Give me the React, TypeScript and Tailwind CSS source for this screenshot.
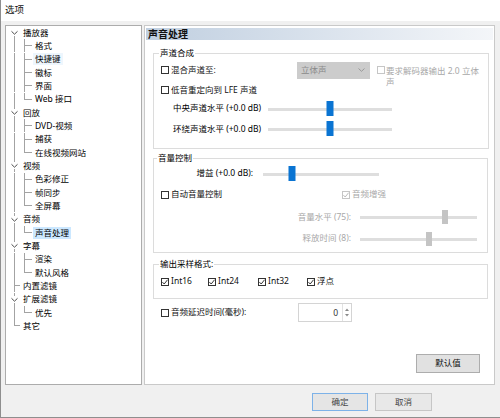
import React from 'react';

type TreeNode = { label: string; children?: string[] };

const tree: TreeNode[] = [
  { label: '播放器', children: ['格式', '快捷键', '徽标', '界面', 'Web 接口'] },
  { label: '回放', children: ['DVD-视频', '捕获', '在线视频网站'] },
  { label: '视频', children: ['色彩修正', '帧同步', '全屏幕'] },
  { label: '音频', children: ['声音处理'] },
  { label: '字幕', children: ['渲染', '默认风格'] },
  { label: '内置滤镜' },
  { label: '扩展滤镜', children: ['优先'] },
  { label: '其它' },
];

const LINE = '#a3a3a3';

function Check({
  label,
  checked = false,
  disabled = false,
  className = '',
}: {
  label: string;
  checked?: boolean;
  disabled?: boolean;
  className?: string;
}) {
  return (
    <div className={`flex items-center gap-[2px] ${className}`}>
      <span
        className={`flex h-[8px] w-[8px] shrink-0 items-center justify-center border bg-white ${
          disabled ? 'border-[#c6c6c6]' : 'border-[#333333]'
        }`}
      >
        {checked && (
          <svg width="6" height="6" viewBox="0 0 6 6">
            <path
              d="M0.4 3.1 L2.2 5 L5.6 0.7"
              fill="none"
              stroke={disabled ? '#b4b4b4' : '#222222'}
              strokeWidth="0.9"
            />
          </svg>
        )}
      </span>
      <span className={`whitespace-nowrap ${disabled ? 'text-[#a8a8a8]' : 'text-[#111111]'}`}>{label}</span>
    </div>
  );
}

function Slider({ value, disabled = false, className = '' }: { value: number; disabled?: boolean; className?: string }) {
  return (
    <div className={`relative h-[16px] shrink-0 ${className}`}>
      <div className="absolute left-0 right-0 top-[7px] h-[3px] bg-[#dedede]" />
      <div
        className={`absolute -translate-x-1/2 ${
          disabled ? 'top-[1px] h-[14px] w-[6px] bg-[#c4c4c4]' : 'top-[0px] h-[15px] w-[7px] bg-[#0a74d2]'
        }`}
        style={{ left: `${value * 100}%` }}
      />
    </div>
  );
}

function Guides({ width, children }: { width: number; children: React.ReactNode }) {
  return (
    <svg width={width} height="13.33" className="shrink-0" shapeRendering="crispEdges">
      {children}
    </svg>
  );
}

function TreePanel() {
  const rows: React.ReactNode[] = [];
  tree.forEach((node, i) => {
    const first = i === 0;
    const last = i === tree.length - 1;
    rows.push(
      <div key={node.label} className="flex h-[13.33px] items-center">
        <Guides width={15}>
          {node.children ? (
            <>
              {!first && <line x1="8.5" y1="0" x2="8.5" y2="3" stroke={LINE} />}
              {!last && <line x1="8.5" y1="10" x2="8.5" y2="13.33" stroke={LINE} />}
              <path d="M5.5 5.3 L8.5 8.2 L11.5 5.3" fill="none" stroke="#4a4a4a" shapeRendering="auto" />
            </>
          ) : (
            <>
              <line x1="8.5" y1="0" x2="8.5" y2={last ? 6.5 : 13.33} stroke={LINE} />
              <line x1="8.5" y1="6.5" x2="14" y2="6.5" stroke={LINE} />
            </>
          )}
        </Guides>
        <span className="px-[2px] leading-[12px]">{node.label}</span>
      </div>
    );
    node.children?.forEach((child, j) => {
      const lastChild = j === node.children!.length - 1;
      const selected = child === '声音处理';
      const hot = child === '快捷键';
      rows.push(
        <div key={node.label + child} className="flex h-[13.33px] items-center">
          <Guides width={27}>
            {!last && <line x1="8.5" y1="0" x2="8.5" y2="13.33" stroke={LINE} />}
            <line x1="18.5" y1="0" x2="18.5" y2={lastChild ? 6.5 : 13.33} stroke={LINE} />
            <line x1="18.5" y1="6.5" x2="26" y2="6.5" stroke={LINE} />
          </Guides>
          <span
            className={`px-[2px] leading-[12px] ${
              selected ? 'bg-[#cce8ff]' : hot ? 'bg-[#eef6fd]' : ''
            }`}
          >
            {child}
          </span>
        </div>
      );
    });
  });

  return (
    <div className="flex h-[360px] w-[137px] shrink-0 flex-col border border-[#acacac] bg-white">{rows}</div>
  );
}

function SoundPanel() {
  return (
    <div className="ml-[2px] flex h-[360px] w-[351px] shrink-0 flex-col border border-[#c9c9c9] bg-white px-[1px] pt-[2px]">
      <div className="flex h-[12px] items-center bg-gradient-to-r from-[#c0cfe0] to-[#f4f6f9] pl-[2px] text-[10px] font-bold leading-none text-[#111111]">
        声音处理
      </div>

      <fieldset className="ml-[7px] mr-[5px] mt-[7px] border border-[#dcdcdc] px-[7px] pb-[8px]">
        <legend className="-ml-[2px] px-[1px] leading-[12px]">声道合成</legend>
        <div className="flex h-[22px] items-center">
          <Check label="混合声道至:" className="w-[136px]" />
          <div className="flex h-[17px] w-[73px] shrink-0 items-center justify-between bg-[#cccccc] pl-[4px] pr-[5px] text-[#8a8a8a]">
            <span>立体声</span>
            <svg width="7" height="4" viewBox="0 0 7 4">
              <path d="M0.5 0.5 L3.5 3.3 L6.5 0.5" fill="none" stroke="#9a9a9a" />
            </svg>
          </div>
          <div className="ml-[7px] flex h-[11px] items-start gap-[1px]">
            <span className="mt-[1.5px] h-[8px] w-[8px] shrink-0 border border-[#c6c6c6] bg-white" />
            <span className="w-[95px] leading-[11px] text-[#a8a8a8]">要求解码器输出 2.0 立体声</span>
          </div>
        </div>
        <div className="flex h-[18px] items-center">
          <Check label="低音重定向到 LFE 声道" />
        </div>
        <div className="flex h-[19px] items-center pl-[12px]">
          <span className="w-[95px] shrink-0 whitespace-nowrap">中央声道水平 (+0.0 dB)</span>
          <Slider value={0.5} className="w-[124px]" />
        </div>
        <div className="flex h-[22px] items-center pl-[12px]">
          <span className="w-[95px] shrink-0 whitespace-nowrap">环绕声道水平 (+0.0 dB)</span>
          <Slider value={0.5} className="w-[124px]" />
        </div>
      </fieldset>

      <fieldset className="ml-[7px] mr-[5px] mt-[3px] border border-[#dcdcdc] px-[7px] pb-[3px]">
        <legend className="-ml-[4px] px-[1px] leading-[12px]">音量控制</legend>
        <div className="flex h-[19px] items-center">
          <span className="w-[92px] shrink-0 whitespace-nowrap text-right">增益 (+0.0 dB):</span>
          <Slider value={0.25} className="ml-[10px] w-[116px]" />
        </div>
        <div className="flex h-[23px] items-center">
          <Check label="自动音量控制" className="w-[181px]" />
          <Check label="音频增强" checked disabled />
        </div>
        <div className="flex h-[22px] items-center">
          <span className="w-[190px] shrink-0 whitespace-nowrap text-right text-[#a8a8a8]">音量水平 (75):</span>
          <Slider value={0.73} disabled className="ml-[9px] w-[117px]" />
        </div>
        <div className="flex h-[21px] items-center">
          <span className="w-[190px] shrink-0 whitespace-nowrap text-right text-[#a8a8a8]">释放时间 (8):</span>
          <Slider value={0.59} disabled className="ml-[9px] w-[117px]" />
        </div>
      </fieldset>

      <fieldset className="ml-[7px] mr-[5px] mt-[5px] border border-[#dcdcdc] px-[7px] pb-[5px]">
        <legend className="-ml-[2px] px-[1px] leading-[12px]">输出采样格式:</legend>
        <div className="flex h-[23px] items-center">
          <Check label="Int16" checked className="w-[47px]" />
          <Check label="Int24" checked className="w-[50px]" />
          <Check label="Int32" checked className="w-[49px]" />
          <Check label="浮点" checked />
        </div>
      </fieldset>

      <div className="mt-[4px] flex h-[19px] items-center pl-[15px]">
        <Check label="音频延迟时间(毫秒):" className="w-[137px]" />
        <div className="flex h-[19px] w-[54px] border border-[#d4d4d4] bg-white">
          <span className="flex-1 pr-[4px] text-right leading-[17px] text-[#333333]">0</span>
          <div className="flex w-[9px] flex-col items-center justify-center gap-[3px] border-l border-[#e2e2e2]">
            <svg width="4" height="3" viewBox="0 0 4 3">
              <path d="M0 3 L2 0.5 L4 3 Z" fill="#8a8a8a" />
            </svg>
            <svg width="4" height="3" viewBox="0 0 4 3">
              <path d="M0 0 L2 2.5 L4 0 Z" fill="#8a8a8a" />
            </svg>
          </div>
        </div>
      </div>

      <button className="mr-[13px] mt-[32px] h-[19px] w-[64px] self-end border border-[#adadad] bg-[#e1e1e1] text-[8.5px] text-[#111111]">
        默认值
      </button>
    </div>
  );
}

export default function App() {
  return (
    <div className="flex h-[418px] w-[500px] flex-col overflow-hidden border-b border-l border-[#8e8e8e] bg-[#f0f0f0] font-['Noto_Sans','Noto_Sans_CJK_SC',sans-serif] text-[8.5px] text-black">
      <div className="flex h-[21px] shrink-0 items-center bg-white pl-[4px] text-[9.5px] text-[#111111]">选项</div>
      <div className="flex pl-[4px] pt-[4px]">
        <TreePanel />
        <SoundPanel />
      </div>
      <div className="flex gap-[7px] pl-[311px] pt-[8px]">
        <button className="h-[18px] w-[56px] border border-[#7db2e8] bg-[#e5e5e5] text-[8.5px] text-[#444444]">确定</button>
        <button className="h-[18px] w-[57px] border border-[#c6c6c6] bg-[#e8e8e8] text-[8.5px] text-[#444444]">取消</button>
      </div>
    </div>
  );
}
